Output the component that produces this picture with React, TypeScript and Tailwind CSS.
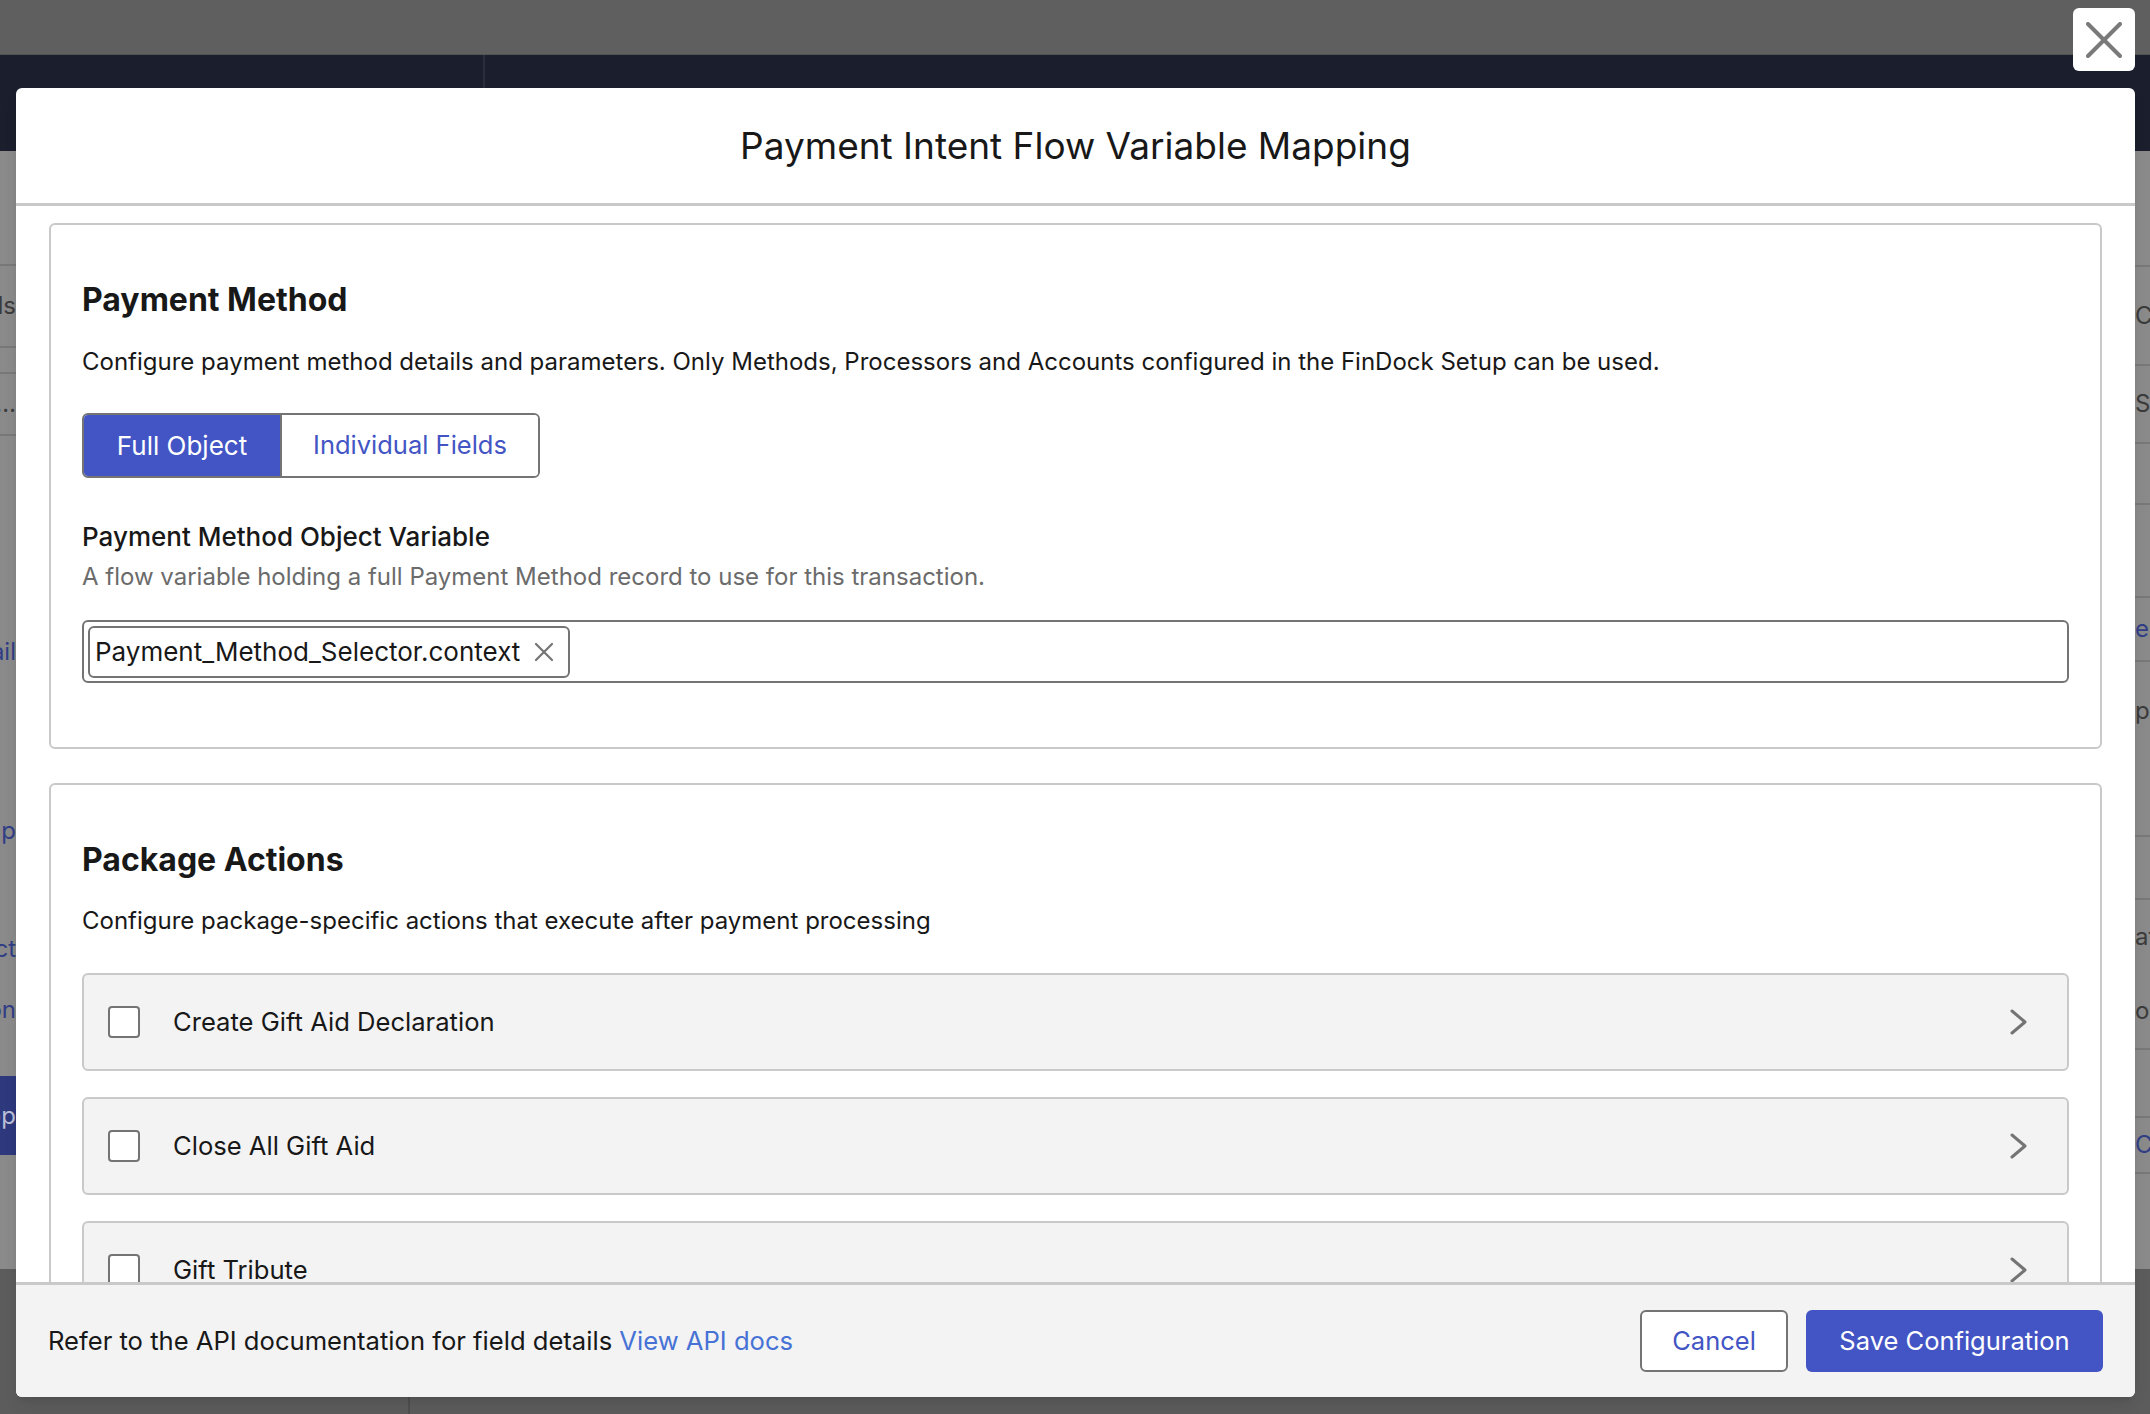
import { ReactNode } from 'react'

type Frag = { h: number; text?: string; tone?: 'dark' | 'blue' | 'block'; line?: boolean }

const leftFrags: Frag[] = [
  { h: 115, line: true },
  { h: 82, text: 'Records', tone: 'dark', line: true },
  { h: 26, line: true },
  { h: 62, text: 'Setup…', tone: 'dark', line: true },
  { h: 170 },
  { h: 92, text: 'Email', tone: 'blue' },
  { h: 100 },
  { h: 66, text: 'Setup', tone: 'blue' },
  { h: 50 },
  { h: 70, text: 'Connect', tone: 'blue' },
  { h: 52, text: 'Action', tone: 'blue' },
  { h: 40 },
  { h: 79, text: 'App', tone: 'block' },
]

const rightFrags: Frag[] = [
  { h: 116, line: true },
  { h: 99, text: 'Co', tone: 'dark', line: true },
  { h: 78, text: 'St', tone: 'dark', line: true },
  { h: 61, line: true },
  { h: 93, line: true },
  { h: 64, text: 'en', tone: 'blue', line: true },
  { h: 97, text: 'pa', tone: 'dark' },
  { h: 78, line: true },
  { h: 63, line: true },
  { h: 73, text: 'at', tone: 'dark' },
  { h: 77, text: 'o', tone: 'dark', line: true },
  { h: 68, line: true },
  { h: 56, text: 'Co', tone: 'blue', line: true },
]

function Strip({ frags, align }: { frags: Frag[]; align: 'start' | 'end' }) {
  return (
    <div className="flex w-full flex-col">
      {frags.map((f, i) => (
        <div
          key={i}
          style={{ height: f.h }}
          className={`flex items-center overflow-hidden whitespace-nowrap text-[24px] ${align === 'end' ? 'justify-end' : 'justify-start'} ${f.line ? 'border-b-2 border-[#787878]' : ''} ${f.tone === 'block' ? 'bg-[#2d387d] text-[#b9bed6]' : ''} ${f.tone === 'blue' ? 'text-[#313e86]' : ''} ${f.tone === 'dark' ? 'text-[#3b3b3b]' : ''}`}
        >
          {f.text}
        </div>
      ))}
    </div>
  )
}

function Chevron() {
  return (
    <svg width="20" height="26" viewBox="0 0 20 26" fill="none">
      <polyline points="3,2 16,13 3,24" stroke="#747474" strokeWidth="3" strokeLinecap="round" strokeLinejoin="round" />
    </svg>
  )
}

function Card({ children }: { children: ReactNode }) {
  return (
    <div className="rounded-md border-2 border-[#c9c9c9] bg-white px-[31px] pt-[57px]">{children}</div>
  )
}

function ActionRow({ label }: { label: string }) {
  return (
    <div className="flex h-[98px] shrink-0 items-center rounded-md border-2 border-[#c9c9c9] bg-[#f3f3f3] pl-[24px] pr-[38px]">
      <span className="h-[32px] w-[32px] rounded-[4px] border-2 border-[#747474] bg-white" />
      <span className="ml-[33px] flex-1 text-[25.6px] text-[#181818]">{label}</span>
      <Chevron />
    </div>
  )
}

export default function App() {
  return (
    <div className="relative h-[1414px] w-[2150px] overflow-hidden font-['Inter',_'Liberation_Sans',_sans-serif] text-[#181818]">
      {/* page behind the overlay */}
      <div className="flex h-full flex-col">
        <div className="h-[55px] border-b border-[#535353] bg-[#5f5f5f]" />
        <div className="flex h-[96px] bg-[#1b1e2c]">
          <div className="w-[485px] border-r-2 border-[#2a2d3b]" />
        </div>
        <div className="flex h-[1118px] justify-between bg-[#8a8a8a]">
          <div className="w-[16px]">
            <Strip frags={leftFrags} align="end" />
          </div>
          <div className="w-[15px]">
            <Strip frags={rightFrags} align="start" />
          </div>
        </div>
        <div className="flex flex-1 bg-[#5c5c5c]">
          <div className="w-[410px] border-r-2 border-[#4f4f4f]" />
        </div>
      </div>

      {/* close button */}
      <button className="absolute left-[2073px] top-[8px] flex h-[63px] w-[62px] items-center justify-center rounded-md bg-white">
        <svg width="36" height="36" viewBox="0 0 36 36" fill="none">
          <path d="M2 2 L34 34 M34 2 L2 34" stroke="#7a7a7a" strokeWidth="4" strokeLinecap="round" />
        </svg>
      </button>

      {/* modal */}
      <div className="absolute left-[16px] top-[88px] flex h-[1309px] w-[2119px] flex-col overflow-hidden rounded-md bg-white shadow-lg">
        <div className="flex h-[115px] shrink-0 items-center justify-center">
          <h1 className="text-[37px] font-normal text-[#181818]">Payment Intent Flow Variable Mapping</h1>
        </div>
        <div className="h-[3px] shrink-0 bg-[#c9c9c9]" />

        <div className="flex flex-1 flex-col gap-[34px] overflow-hidden px-[33px] pt-[17px]">
          <Card>
            <h2 className="text-[32px] font-bold leading-[36px]">Payment Method</h2>
            <p className="mt-[26px] text-[24px] leading-[36px]">
              Configure payment method details and parameters. Only Methods, Processors and Accounts configured in the FinDock Setup can be used.
            </p>
            <div className="mt-[33px] flex h-[65px] w-[458px] overflow-hidden rounded-md border-2 border-[#747474] text-[26px]">
              <div className="flex w-[196px] items-center justify-center bg-[#4355c4] text-white">Full Object</div>
              <div className="flex flex-1 items-center justify-center border-l-2 border-[#747474] bg-white text-[25.5px] text-[#4355c4]">Individual Fields</div>
            </div>
            <div className="mt-[41px] text-[26px] font-medium leading-[36px]">Payment Method Object Variable</div>
            <div className="mt-[4px] text-[24px] leading-[36px] text-[#6b6b6b]">
              A flow variable holding a full Payment Method record to use for this transaction.
            </div>
            <div className="mb-[64px] mt-[25px] flex h-[63px] items-center rounded-md border-2 border-[#747474] px-[4px]">
              <div className="flex h-[52px] items-center gap-[14px] rounded-md border-2 border-[#747474] pl-[5px] pr-[14px] text-[26px]">
                <span>Payment_Method_Selector.context</span>
                <svg width="20" height="20" viewBox="0 0 20 20" fill="none">
                  <path d="M2 2 L18 18 M18 2 L2 18" stroke="#747474" strokeWidth="2.2" strokeLinecap="round" />
                </svg>
              </div>
            </div>
          </Card>

          <Card>
            <h2 className="text-[32px] font-bold leading-[36px]">Package Actions</h2>
            <p className="mt-[25px] text-[24px] leading-[36px]">
              Configure package-specific actions that execute after payment processing
            </p>
            <div className="mt-[34px] flex flex-col gap-[26px] pb-[40px]">
              <ActionRow label="Create Gift Aid Declaration" />
              <ActionRow label="Close All Gift Aid" />
              <ActionRow label="Gift Tribute" />
            </div>
          </Card>
        </div>

        <div className="flex h-[115px] shrink-0 items-center justify-between border-t-[3px] border-[#c9c9c9] bg-[#f3f3f3] px-[32px]">
          <p className="text-[25.6px]">
            Refer to the API documentation for field details <span className="text-[#4672d6]">View API docs</span>
          </p>
          <div className="flex items-center gap-[18px]">
            <button className="h-[62px] w-[148px] rounded-md border-2 border-[#747474] bg-white text-[25.5px] text-[#4355c4]">Cancel</button>
            <button className="h-[62px] w-[297px] rounded-md bg-[#4355c4] text-[25.5px] text-white">Save Configuration</button>
          </div>
        </div>
      </div>
    </div>
  )
}
